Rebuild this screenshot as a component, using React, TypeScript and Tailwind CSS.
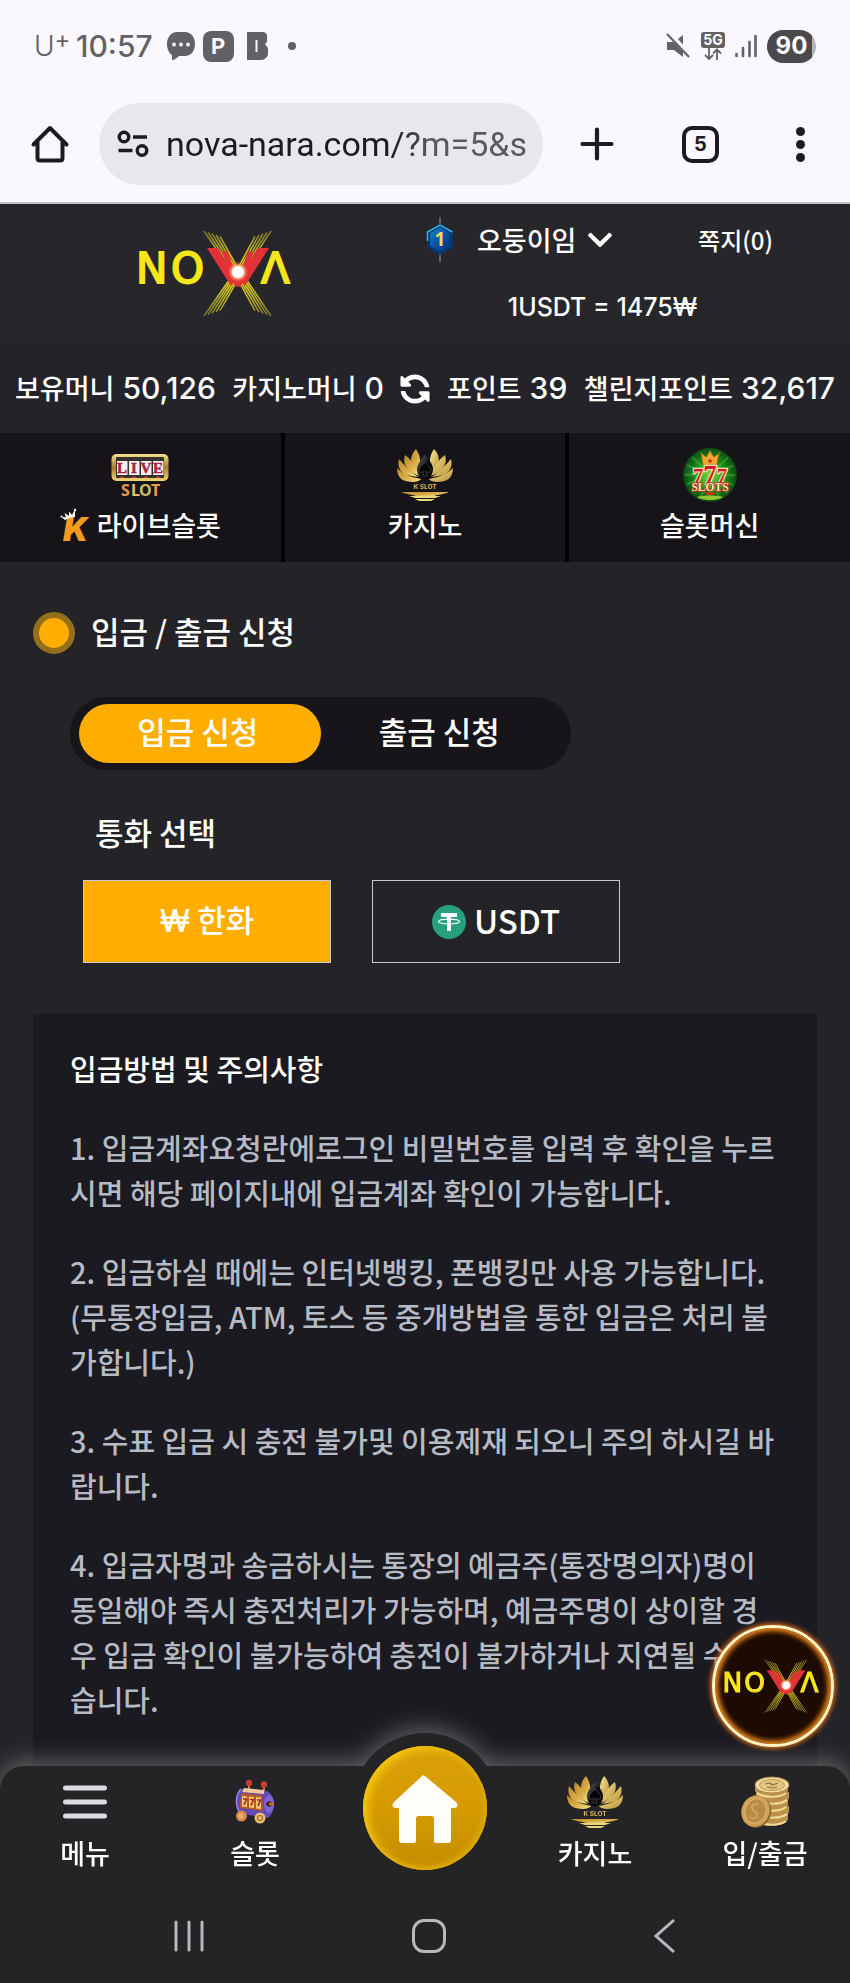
import { useId, useState } from "react";
import type { ReactNode } from "react";
import { FaChevronDown, FaSyncAlt } from "react-icons/fa";

function NovaLogo({ className }: { className: string }) {
  const id = useId();
  const rays = [0, 4, 8, 12, 16];
  return (
    <svg viewBox="0 0 160 88" className={className} role="img" aria-label="NOVA">
      <defs>
        <radialGradient id={`${id}g`}>
          <stop offset="0" stopColor="#ffffff" />
          <stop offset="0.4" stopColor="#fff6e0" />
          <stop offset="0.65" stopColor="#ff9a6a" stopOpacity="0.8" />
          <stop offset="1" stopColor="#e53030" stopOpacity="0" />
        </radialGradient>
        <radialGradient id={`${id}r`} gradientUnits="userSpaceOnUse" cx="101" cy="43" r="52">
          <stop offset="0" stopColor="#fff000" />
          <stop offset="0.5" stopColor="#c4bb28" />
          <stop offset="1" stopColor="#7d7828" />
        </radialGradient>
      </defs>
      <g stroke={`url(#${id}r)`} strokeWidth="1.5" fill="none">
        {rays.map((r) => (
          <g key={r}>
            <path d={`M${67 + r} ${1 + r / 3}L${95 + r / 2} 42`} />
            <path d={`M${134 - r} ${1 + r / 3}L${107 - r / 2} 42`} />
            <path d={`M${67 + r} ${86 - r / 3}L${95 + r / 2} 46`} />
            <path d={`M${134 - r} ${86 - r / 3}L${107 - r / 2} 46`} />
          </g>
        ))}
      </g>
      <g fontFamily="DejaVu Sans" fill="#f6e61c" stroke="#f6e61c" strokeWidth="1.8">
        <text x="-1" y="53" fontSize="42">N</text>
        <text x="34" y="53" fontSize="42">O</text>
        <text x="124" y="53" fontSize="42">Λ</text>
      </g>
      <path d="M70 18H81L99 50L94 56ZM132 18H121L103 50L108 56Z" fill="#e23238" />
      <text x="101" y="56" fontSize="46" textAnchor="middle" fontFamily="DejaVu Sans" fill="#e23238" stroke="#e23238" strokeWidth="1">V</text>
      <circle cx="101" cy="42" r="11" fill={`url(#${id}g)`} />
      <circle cx="101" cy="42" r="6" fill="#fff" />
    </svg>
  );
}

function LotusIcon() {
  const id = useId();
  return (
    <svg viewBox="0 0 58 54" className="h-[54px] w-[58px]" aria-hidden="true">
      <defs>
        <linearGradient id={`${id}a`} x1="0" y1="0" x2="1" y2="1">
          <stop offset="0" stopColor="#b9882c" />
          <stop offset="0.55" stopColor="#dcae48" />
          <stop offset="1" stopColor="#f6e98a" />
        </linearGradient>
        <linearGradient id={`${id}b`} x1="0" y1="0" x2="1" y2="1">
          <stop offset="0" stopColor="#f8ef98" />
          <stop offset="1" stopColor="#b98930" />
        </linearGradient>
        <linearGradient id={`${id}c`} x1="0" y1="0" x2="1" y2="1">
          <stop offset="0" stopColor="#77777c" />
          <stop offset="0.5" stopColor="#0a0a0c" />
        </linearGradient>
      </defs>
      <g fill={`url(#${id}a)`}>
        <path d="M20 1C13 8 13 18 23 26C25 16 25 8 20 1Z" />
        <path d="M9 7C6 16 11 23 23 28C19 18 15 11 9 7Z" />
        <path d="M3 11C1 18 4 24 10 27L22 29C14 23 8 17 3 11Z" />
        <path d="M1 20C1 31 8 34 17 34C23 34 25 31 25 31C16 29 8 27 1 20Z" />
      </g>
      <g fill={`url(#${id}b)`}>
        <path d="M38 1C45 8 45 18 35 26C33 16 33 8 38 1Z" />
        <path d="M49 7C52 16 47 23 35 28C39 18 43 11 49 7Z" />
        <path d="M55 11C57 18 54 24 48 27L36 29C44 23 50 17 55 11Z" />
        <path d="M57 20C57 31 50 34 41 34C35 34 33 31 33 31C42 29 50 27 57 20Z" />
      </g>
      <path d="M29 7C25 12 21 16 21 21C21 27 25 30 29 32C33 30 37 27 37 21C37 16 33 12 29 7Z" fill={`url(#${id}c)`} />
      <path d="M29 14C27 17 23 19 23 22C23 25 27 25 28 23L27 28H31L30 23C31 25 35 25 35 22C35 19 31 17 29 14Z" fill="#050506" stroke="#55555c" strokeWidth="0.6" />
      <text x="29" y="41" textAnchor="middle" fontFamily="Inter" fontSize="6.5" fontWeight="700" fill="#d9b65a">K SLOT</text>
      <path d="M5 44H53C47 47 42 46 38 48H20C16 46 11 47 5 44Z" fill={`url(#${id}a)`} />
      <path d="M13 48H45L39 50H19Z" fill="#e9d877" />
      <path d="M19 51H39L35 53H23Z" fill="#e9d877" />
    </svg>
  );
}

function LiveSlotIcon() {
  return (
    <svg viewBox="0 0 60 46" className="h-[46px] w-[60px]" aria-hidden="true">
      <defs>
        <linearGradient id="live-frame" x1="0" y1="0" x2="0" y2="1">
          <stop offset="0" stopColor="#f7e38c" />
          <stop offset="0.5" stopColor="#a87d28" />
          <stop offset="1" stopColor="#f1d870" />
        </linearGradient>
      </defs>
      <rect x="1.5" y="2" width="57" height="27" rx="5" fill="url(#live-frame)" />
      <rect x="6" y="5" width="48" height="21" rx="1" fill="#35312c" />
      {[7, 19, 31, 43].map((x) => (
        <g key={x}>
          <rect x={x} y="9" width="10.500" height="14" fill="#f4eff2" />
          <path d={`M${x + 2} 26l3-2 3 2z`} fill="#c03a4a" />
        </g>
      ))}
      <g fontFamily="Liberation Serif" fontWeight="700" fontSize="15" fill="#a5263c" stroke="#a5263c" strokeWidth="0.5" textAnchor="middle">
        <text x="12" y="21">L</text>
        <text x="24" y="21">I</text>
        <text x="36" y="21">V</text>
        <text x="48" y="21">E</text>
      </g>
      <g fontFamily="Noto Sans" fontWeight="700" fontSize="16">
        <text x="11" y="44" fill="#e89a4e">S</text>
        <text x="21" y="44" fill="#e9c06c">L</text>
        <text x="29" y="44" fill="#c9bd62">O</text>
        <text x="41" y="44" fill="#ee9a50">T</text>
      </g>
    </svg>
  );
}

function CrownK() {
  return (
    <svg viewBox="0 0 34 36" className="h-9 w-[34px]" aria-hidden="true">
      <text x="3" y="34" fontFamily="Inter" fontSize="33" fontWeight="900" fontStyle="italic" fill="#f59b1f">K</text>
      <path d="M5 13L1 9.500L6 10.500L4.500 6L9 9L9 4.500L12 8L15 2L15 10C11 10 8 11 5 13Z" fill="#fff" />
      <circle cx="1.500" cy="9.500" r="1" fill="#fff" />
      <circle cx="15" cy="3" r="1.200" fill="#fff" />
    </svg>
  );
}

function SevensIcon() {
  const spokes = Array.from({ length: 16 }, (_, i) => (i * 360) / 16);
  return (
    <svg viewBox="0 0 54 54" className="size-[54px]" aria-hidden="true">
      <defs>
        <radialGradient id="sevens-bg">
          <stop offset="0" stopColor="#7ddc3a" />
          <stop offset="0.6" stopColor="#168a1c" />
          <stop offset="1" stopColor="#0a4a12" />
        </radialGradient>
      </defs>
      <circle cx="27" cy="27" r="27" fill="url(#sevens-bg)" />
      {spokes.map((a) => (
        <path key={a} d="M27 27L26 2L28.500 2Z" fill="#7ee04a" opacity="0.3" transform={`rotate(${a} 27 27)`} />
      ))}
      <path d="M20 17L18 5L23 9L27 3L31 9L36 5L34 17Z" fill="#f0a62c" stroke="#8a4a10" strokeWidth="0.6" />
      <circle cx="27" cy="13" r="1.800" fill="#c92323" />
      <g fontFamily="Liberation Serif" fontWeight="700" fill="#d41c20" stroke="#ffe2b0" textAnchor="middle" paintOrder="stroke" strokeWidth="2.400">
        <text x="15" y="35" fontSize="21">7</text>
        <text x="39" y="35" fontSize="21">7</text>
        <text x="27" y="36" fontSize="27">7</text>
      </g>
      <text x="27" y="43" textAnchor="middle" fontFamily="Liberation Serif" fontWeight="700" fontSize="11.5" fill="#fbe0b4" stroke="#b8301c" strokeWidth="1.600" paintOrder="stroke">SLOTS</text>
      <path d="M21 44.500H33L30 47H24Z" fill="#d8281c" />
      <path d="M14 49C20 47 34 47 40 49C36 53 18 53 14 49Z" fill="#8fc832" />
    </svg>
  );
}

function SlotMachineIcon() {
  return (
    <svg viewBox="0 0 42 46" className="h-[46px] w-[42px]" aria-hidden="true">
      <path d="M15 12V5M30 13V7" stroke="#d98b4c" strokeWidth="1.800" />
      <circle cx="15" cy="4" r="3.200" fill="#c93a30" />
      <circle cx="30" cy="5.500" r="3.200" fill="#c93a30" />
      <path d="M8 10L33 12C42 16 42 33 34 39L8 35C0 29 1 14 8 10Z" fill="#6448b8" />
      <path d="M7 10C1 16 1 28 7 35" stroke="#9d80ee" strokeWidth="1.600" fill="none" />
      <path d="M10 9L30 11V15L8 13Z" fill="#f2c9a0" />
      <path d="M7 14L28 16L29 32L6 29Z" fill="#b4592c" />
      <path d="M8 17L13 17.500V28L8 27.500ZM15 17.500L20 18V29L15 28.500ZM22 18L27 18.500V30L22 29.500Z" fill="#ffc56c" />
      <g stroke="#a52a20" strokeWidth="1.700" fill="none">
        <path d="M9 20h3.500l-2.500 6M16 20.500h3.500l-2.500 6M23 21h3.500l-2.500 6" />
      </g>
      <ellipse cx="35" cy="25" rx="5" ry="9" fill="#8065d2" />
      <circle cx="35" cy="25" r="2.800" fill="#4a2420" />
      <path d="M35 25h5" stroke="#c96d35" strokeWidth="2.400" />
      <circle cx="7.500" cy="37" r="5.500" fill="#d9854a" />
      <circle cx="7" cy="37" r="3" fill="#edaa68" />
      <circle cx="26" cy="39" r="5.500" fill="#e8bd72" />
      <circle cx="26" cy="39" r="2.500" fill="none" stroke="#a86a30" strokeWidth="1.200" />
    </svg>
  );
}

function CoinsIcon() {
  return (
    <svg viewBox="0 0 50 52" className="h-[52px] w-[50px]" aria-hidden="true">
      {[40, 33, 26, 19, 12].map((y, i) => (
        <g key={y}>
          <path d={`M${15 + (i % 2)} ${y - 3}V${y + 3}C18 ${y + 12} 46 ${y + 12} ${48 + (i % 2)} ${y + 3}V${y - 3}Z`} fill="#bb9048" />
          <path d={`M${17 + (i % 2)} ${y + 5}C24 ${y + 10} 40 ${y + 10} ${46 + (i % 2)} ${y + 5}`} stroke="#efd795" strokeWidth="2.200" fill="none" />
        </g>
      ))}
      <ellipse cx="32" cy="9" rx="17" ry="8" fill="#f2dca4" stroke="#b08a46" strokeWidth="1" />
      <ellipse cx="32" cy="9" rx="12.500" ry="5.500" fill="#e2c684" stroke="#b08a46" strokeWidth="0.800" />
      <path d="M25 8l5-1 2 2 6-2M27 11l6 1 4-1" stroke="#93713a" strokeWidth="1.200" fill="none" />
      <ellipse cx="17" cy="36" rx="14" ry="16" fill="#8d6630" transform="rotate(20 17 36)" />
      <ellipse cx="15.500" cy="35" rx="14" ry="16" fill="#d0a053" transform="rotate(20 15.500 35)" />
      <ellipse cx="15.500" cy="35" rx="10.500" ry="12.500" fill="#b98b45" stroke="#dfb974" strokeWidth="1" transform="rotate(20 15.500 35)" />
      <path d="M19 28c-6-1-9 3-6 6s5 3 4 6-5 3-7 1" stroke="#d3ab66" strokeWidth="1.500" fill="none" />
    </svg>
  );
}

function LevelBadge() {
  return (
    <svg viewBox="0 0 30 46" className="h-[46px] w-[30px] shrink-0" role="img" aria-label="레벨 1">
      <defs>
        <linearGradient id="badge-fill" x1="0" y1="0" x2="1" y2="1">
          <stop offset="0" stopColor="#1683cc" />
          <stop offset="0.5" stopColor="#0753a8" />
          <stop offset="1" stopColor="#06326e" />
        </linearGradient>
      </defs>
      <path d="M15 0V8M15 37V45" stroke="#8f9aa6" strokeWidth="1" />
      <path d="M15 7L28 14.500V30.500L15 38L2 30.500V14.500Z" fill="#08376f" />
      <path d="M2.500 24V15L15 8L27.500 15" stroke="#2bb6dd" strokeWidth="1.500" fill="none" />
      <path d="M15 10.500L25 16.200V28.800L15 34.500L5 28.800V16.200Z" fill="url(#badge-fill)" />
      <text x="15" y="29" textAnchor="middle" fontFamily="Noto Sans" fontWeight="700" fontSize="19" fill="#f7d955">1</text>
    </svg>
  );
}

function StatusBar() {
  return (
    <div className="flex h-[92px] items-center justify-between pr-[34px] pl-8 font-[Inter,sans-serif] text-[#636166]">
      <div className="flex items-center">
        <span className="flex w-11 items-start pl-0.5 text-[28px] leading-8">
          <span className="font-light">U</span>
          <span className="text-[24px] leading-5">+</span>
        </span>
        <span className="text-[30px] leading-8 font-medium">10:57</span>
        <div className="ml-3.5 flex items-center gap-2">
          <svg viewBox="0 0 28 30" className="h-[30px] w-7" aria-hidden="true">
            <path d="M10 1h8c6 0 10 5 10 12s-4 12-10 12h-6c-2 2-5 4-7 4v-5C2 22 0 18 0 13 0 6 4 1 10 1Z" fill="currentColor" />
            <circle cx="7" cy="13.500" r="1.900" fill="#fff" />
            <circle cx="14" cy="13.500" r="1.900" fill="#fff" />
            <circle cx="21" cy="13.500" r="1.900" fill="#fff" />
          </svg>
          <span className="flex size-[31px] items-center justify-center rounded-lg bg-[#636166] text-[22px] leading-none font-bold text-[#fbf8fd]">P</span>
          <svg viewBox="0 0 22 28" className="ml-1 h-7 w-[22px]" aria-hidden="true">
            <path d="M1 0h15c4 0 6 3 5 6v4l-2 2 3 4v5c0 4-3 7-7 7H1Z" fill="currentColor" />
            <path d="M9.500 8h2v12h-2z" fill="#fbf8fd" />
          </svg>
          <span className="ml-3 size-2 rounded-full bg-[#636166]" />
        </div>
      </div>
      <div className="flex items-center gap-2.5">
        <svg viewBox="0 0 26 26" className="size-[26px]" aria-hidden="true">
          <path d="M2 9h7l9-7v22l-9-7H2Z" fill="currentColor" />
          <path d="M4 0L26 24" stroke="#fbf8fd" strokeWidth="5" />
          <path d="M2 1L24 24" stroke="currentColor" strokeWidth="2.200" />
        </svg>
        <span className="flex flex-col items-center">
          <span className="flex h-4 w-6 items-center justify-center rounded-[3px] bg-[#636166] text-sm leading-none font-bold text-white">5G</span>
          <svg viewBox="0 0 18 12" className="h-3 w-[18px]" fill="none" stroke="currentColor" strokeWidth="1.800" aria-hidden="true">
            <path d="M5 0v10M1 7l4 4 4-4M13 12V2M9 5.500l4-4 4 4" />
          </svg>
        </span>
        <svg viewBox="0 0 22 24" className="h-6 w-[22px]" fill="none" stroke="currentColor" strokeWidth="2.600" strokeLinecap="round" aria-hidden="true">
          <path d="M1.500 20v2M8 14v8M14.500 8v14M20.500 2v20" />
        </svg>
        <span className="flex h-[33px] w-[49px] items-center overflow-hidden rounded-full bg-[#b5b3b8]">
          <span className="flex h-full w-[45px] items-center justify-center bg-[#4b494d] pl-1 text-[24px] leading-none font-bold text-white">90</span>
        </span>
      </div>
    </div>
  );
}

function BrowserToolbar() {
  return (
    <div className="flex h-[104px] items-center pr-10 pl-[30px] text-[#1c1b20]">
      <button type="button" aria-label="홈" className="w-10">
        <svg viewBox="0 0 40 40" className="size-10" fill="none" stroke="currentColor" strokeWidth="4" strokeLinejoin="round" strokeLinecap="round" aria-hidden="true">
          <path d="M3.500 20.500L20 4l16.500 16.500M7.500 18v16c0 1.500.8 2.500 2.500 2.500h20c1.700 0 2.500-1 2.500-2.500V18" />
        </svg>
      </button>
      <label className="ml-[29px] flex h-[82px] min-w-0 flex-1 items-center gap-[17px] rounded-full bg-[#e9e7ec] pl-[18px]">
        <svg viewBox="0 0 32 28" className="h-7 w-8 shrink-0" fill="none" stroke="currentColor" strokeWidth="3.400" aria-hidden="true">
          <circle cx="7" cy="7" r="4.800" />
          <path d="M16 7h14M1.500 20.500h14" />
          <circle cx="25" cy="20.500" r="4.800" />
        </svg>
        <input
          aria-label="주소"
          defaultValue="nova-nara.com/?m=5&s"
          className="w-full min-w-0 flex-1 bg-gradient-to-r from-[#1c1b20] from-60% to-[#5b595f] to-70% bg-clip-text font-[Roboto,sans-serif] text-[34px] leading-[44px] text-transparent outline-none"
        />
      </label>
      <div className="ml-[37px] flex items-center">
        <button type="button" aria-label="새 탭">
          <svg viewBox="0 0 34 34" className="size-[34px]" stroke="currentColor" strokeWidth="4.200" strokeLinecap="round" aria-hidden="true">
            <path d="M17 2.500v29M2.500 17h29" />
          </svg>
        </button>
        <button type="button" aria-label="탭 5개" className="ml-[68px] flex size-[37px] items-center justify-center rounded-[10px] border-4 border-[#1c1b20] font-[Inter,sans-serif] text-[20px] leading-none font-bold">
          5
        </button>
        <button type="button" aria-label="더보기" className="ml-[71px] flex w-5 flex-col items-center gap-1">
          <span className="size-[9px] rounded-full bg-[#1c1b20]" />
          <span className="size-[9px] rounded-full bg-[#1c1b20]" />
          <span className="size-[9px] rounded-full bg-[#1c1b20]" />
        </button>
      </div>
    </div>
  );
}

function Balance({ label, value }: { label: string; value: string }) {
  return (
    <span className="flex items-baseline gap-2">
      {label}
      <span className="font-[Inter,sans-serif] text-[30px]">{value}</span>
    </span>
  );
}

function SiteHeader() {
  return (
    <header className="text-white">
      <div className="grid h-[140px] grid-cols-2 bg-[#27262b]">
        <a href="#home" className="flex items-center justify-center pl-2">
          <NovaLogo className="h-[88px] w-40" />
        </a>
        <div className="flex flex-col">
          <div className="flex h-[72px] items-center justify-between pr-[77px]">
            <button type="button" className="flex items-center text-[27px] leading-10 font-medium">
              <LevelBadge />
              <span className="ml-[22px]">오둥이임</span>
              <FaChevronDown className="ml-2.5 size-7" />
            </button>
            <a href="#messages" className="text-2xl leading-9 font-medium">쪽지(0)</a>
          </div>
          <p className="flex h-16 items-center justify-center pr-[70px] font-[Inter,'Noto_Sans_CJK_KR',sans-serif] text-[25px] font-medium">
            1USDT = 1475₩
          </p>
        </div>
      </div>
      <div className="flex h-[89px] items-center justify-between bg-[#25232a] px-[15px] text-[27px] font-medium whitespace-nowrap">
        <Balance label="보유머니" value="50,126" />
        <Balance label="카지노머니" value="0" />
        <button type="button" aria-label="새로고침">
          <FaSyncAlt className="size-[30px] -scale-x-100" />
        </button>
        <Balance label="포인트" value="39" />
        <Balance label="챌린지포인트" value="32,617" />
      </div>
    </header>
  );
}

function GameLink({ icon, prefix, label }: { icon: ReactNode; prefix?: ReactNode; label: string }) {
  return (
    <a href="#games" className="flex h-[129px] flex-col items-center bg-[#161419] pt-3.5">
      <span className="flex h-14 items-center">{icon}</span>
      <span className="mt-0.5 flex items-center gap-[3px] text-[27px] leading-10 font-medium">
        {prefix}
        {label}
      </span>
    </a>
  );
}

const notices = [
  "1. 입금계좌요청란에로그인 비밀번호를 입력 후 확인을 누르시면 해당 페이지내에 입금계좌 확인이 가능합니다.",
  "2. 입금하실 때에는 인터넷뱅킹, 폰뱅킹만 사용 가능합니다.(무통장입금, ATM, 토스 등 중개방법을 통한 입금은 처리 불가합니다.)",
  "3. 수표 입금 시 충전 불가및 이용제재 되오니 주의 하시길 바랍니다.",
  "4. 입금자명과 송금하시는 통장의 예금주(통장명의자)명이 동일해야 즉시 충전처리가 가능하며, 예금주명이 상이할 경우 입금 확인이 불가능하여 충전이 불가하거나 지연될 수 있습니다.",
];

function RequestPanel() {
  const [tab, setTab] = useState("입금 신청");
  const [currency, setCurrency] = useState("KRW");
  return (
    <section className="px-[33px] pt-[47px] text-[31px] leading-[44px] font-medium text-white">
      <h1 className="flex h-12 items-center gap-4">
        <span className="size-[42px] rounded-full border-[6px] border-[#966f1c] bg-[#ffae00]" />
        <span className="pb-1">입금 / 출금 신청</span>
      </h1>
      <div className="mt-10 ml-[37px] flex h-[73px] w-[501px] max-w-full items-center rounded-full bg-[#17151a] px-[9px]">
        {["입금 신청", "출금 신청"].map((t) => (
          <button
            key={t}
            type="button"
            onClick={() => setTab(t)}
            className={`h-[59px] flex-1 rounded-full pr-1 pb-1.5 ${t === tab ? "bg-[#ffae00]" : ""}`}
          >
            {t}
          </button>
        ))}
      </div>
      <h2 className="mt-10 ml-[62px]">통화 선택</h2>
      <div className="mt-[26px] ml-[50px] flex gap-[41px]">
        <button
          type="button"
          onClick={() => setCurrency("KRW")}
          className={`h-[83px] w-[248px] border border-[#c9c7d0] pb-1 ${currency === "KRW" ? "bg-[#ffae00]" : ""}`}
        >
          <span className="font-[Inter,sans-serif]">₩</span> 한화
        </button>
        <button
          type="button"
          onClick={() => setCurrency("USDT")}
          className={`flex h-[83px] w-[248px] items-center justify-center gap-2 border border-[#c9c7d0] ${currency === "USDT" ? "bg-[#ffae00]" : ""}`}
        >
          <svg viewBox="0 0 34 34" className="size-[34px]" aria-hidden="true">
            <circle cx="17" cy="17" r="17" fill="#26a17b" />
            <path d="M9 8h16v4h-6v14h-4V12H9Z" fill="#fff" />
            <ellipse cx="17" cy="16.500" rx="10.500" ry="2.400" fill="none" stroke="#fff" strokeWidth="1.100" />
          </svg>
          <span className="pb-1 text-[33px]">USDT</span>
        </button>
      </div>
    </section>
  );
}

function NoticePanel() {
  return (
    <article className="mx-[33px] mt-[51px] min-h-[780px] bg-[#1a1a20] pt-8 pr-[34px] pl-[37px] text-[29px] leading-[45px]">
      <h2 className="font-medium text-white">입금방법 및 주의사항</h2>
      <div className="mt-[34px] flex flex-col gap-[34px] font-medium text-[#b6bac4]">
        {notices.map((n) => (
          <p key={n}>{n}</p>
        ))}
      </div>
    </article>
  );
}

function TabLink({ icon, label }: { icon: ReactNode; label: string }) {
  return (
    <a href="#tab" className="flex flex-col items-center pt-[9px]">
      <span className="flex h-[54px] items-center">{icon}</span>
      <span className="mt-1 text-[27px] leading-10 font-medium">{label}</span>
    </a>
  );
}

function BottomBar() {
  return (
    <footer className="fixed inset-x-0 bottom-0 text-white">
      <div className="absolute inset-0 drop-shadow-[0_-4px_12px_rgba(255,255,255,0.32)]">
        <span className="absolute -top-[33px] left-1/2 size-[148px] -translate-x-1/2 rounded-full bg-[#242326]" />
        <div className="absolute inset-0 rounded-t-[24px] bg-[#242326]" />
      </div>
      <nav className="relative grid h-[123px] grid-cols-5">
        <TabLink
          label="메뉴"
          icon={
            <svg viewBox="0 0 44 36" className="h-9 w-11" stroke="#dddae2" strokeWidth="5" strokeLinecap="round" aria-hidden="true">
              <path d="M2.500 4h39M2.500 18h39M2.500 32h39" />
            </svg>
          }
        />
        <TabLink label="슬롯" icon={<SlotMachineIcon />} />
        <a href="#home" aria-label="홈" className="-mt-5 flex size-[124px] items-center justify-center justify-self-center rounded-full bg-gradient-to-b from-[#dba00b] via-[#d59b00] to-[#c38d00] shadow-[inset_5px_3px_8px_#f6c70c,inset_-3px_-3px_5px_#d9a800]">
          <svg viewBox="0 0 70 70" className="size-[70px]" aria-hidden="true">
            <path d="M35 3L66 29c3 3 1 6-2 6h-3v32c0 2-1 3-3 3H46c-1 0-2-1-2-2V46c0-2-1-3-2-3H28c-1 0-2 1-2 3v22c0 1-1 2-2 2H12c-2 0-3-1-3-3V35H6c-3 0-5-3-2-6L32 3c1-1 2-1 3 0Z" fill="#fffdf8" />
          </svg>
        </a>
        <TabLink label="카지노" icon={<LotusIcon />} />
        <TabLink label="입/출금" icon={<CoinsIcon />} />
      </nav>
      <div className="relative flex h-[94px] items-center justify-around px-[69px]">
        <button type="button" aria-label="최근 앱">
          <svg viewBox="0 0 32 34" className="h-[34px] w-8" stroke="#b9b7bc" strokeWidth="3" strokeLinecap="round" aria-hidden="true">
            <path d="M3 3v28M16 3v28M29 3v28" />
          </svg>
        </button>
        <button type="button" aria-label="홈 화면" className="size-[34px] rounded-xl border-[3px] border-[#b9b7bc]" />
        <button type="button" aria-label="뒤로">
          <svg viewBox="0 0 24 36" className="h-9 w-6" fill="none" stroke="#b9b7bc" strokeWidth="3" aria-hidden="true">
            <path d="M21 2L3 18l18 16" />
          </svg>
        </button>
      </div>
      <a
        href="#nova"
        className="absolute -top-[141px] right-[16px] flex size-[122px] items-center justify-center rounded-full border-[3px] border-[#fff3c0] bg-[radial-gradient(circle,#1d0a00_60%,#3a1400_85%,#b35a00_100%)] shadow-[0_0_4px_2px_#c9631c,inset_0_0_5px_3px_#f08a1c]"
      >
        <NovaLogo className="h-[55px] w-[100px]" />
      </a>
    </footer>
  );
}

export default function App() {
  return (
    <div className="h-screen overflow-hidden bg-[#242327] font-['Noto_Sans_CJK_KR',sans-serif] text-white">
      <div className="border-b-2 border-[#c5c3c9] bg-[#fbf8fd] pb-1.5">
        <StatusBar />
        <BrowserToolbar />
      </div>
      <SiteHeader />
      <nav className="grid grid-cols-3 gap-1 bg-black">
        <GameLink icon={<LiveSlotIcon />} prefix={<CrownK />} label="라이브슬롯" />
        <GameLink icon={<LotusIcon />} label="카지노" />
        <GameLink icon={<SevensIcon />} label="슬롯머신" />
      </nav>
      <main>
        <RequestPanel />
        <NoticePanel />
      </main>
      <BottomBar />
    </div>
  );
}
